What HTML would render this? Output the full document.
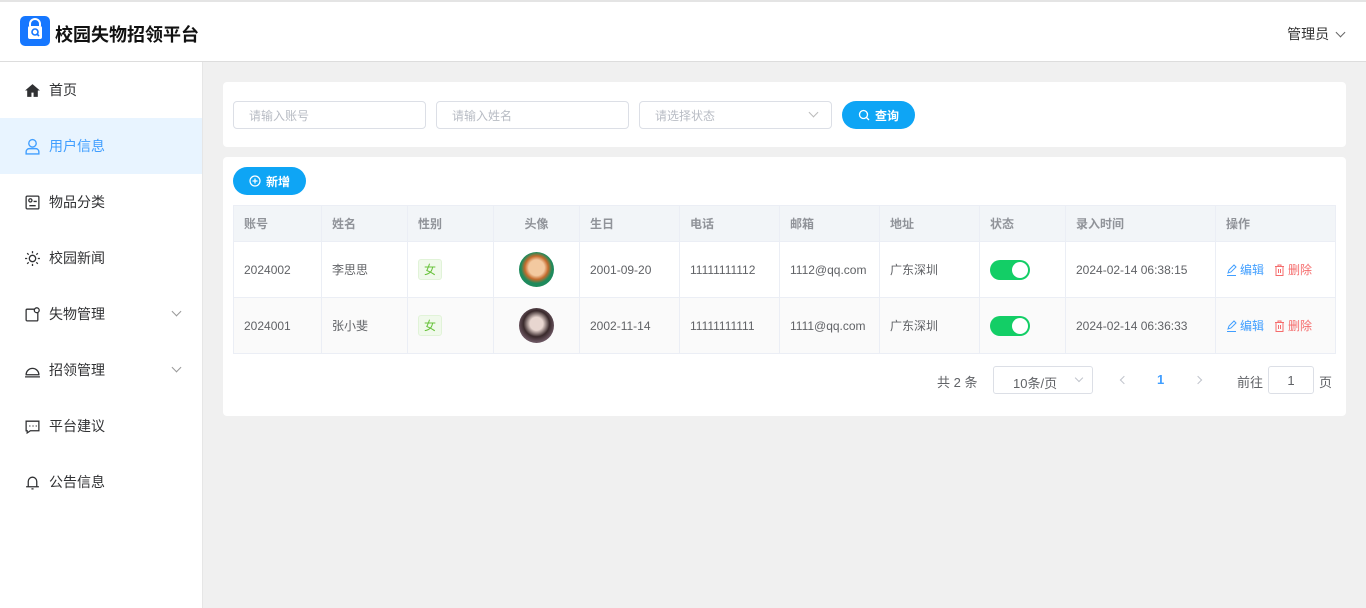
<!DOCTYPE html><html><head><meta charset="utf-8"><style>
*{margin:0;padding:0;box-sizing:border-box}
body{width:1366px;height:608px;overflow:hidden;font-family:"Liberation Sans","Noto Sans CJK SC",sans-serif;font-size:13px;color:#606266;background:#f0f0f0;position:relative}
.hdr{position:absolute;left:0;top:0;width:1366px;height:62px;background:#fff;border-top:2px solid #e4e4e4;border-bottom:1px solid #ddd}
.logo{position:absolute;left:20px;top:14px;width:30px;height:30px;background:#1677ff;border-radius:5px}
.title{position:absolute;left:55px;top:19px;font-size:18px;font-weight:bold;color:#111}
.admin{position:absolute;right:22px;top:22px;font-size:14px;color:#333}
.side{position:absolute;left:0;top:62px;width:203px;height:546px;background:#fff;border-right:1px solid #e6e6e6}
.mi{height:56px;display:flex;align-items:center;padding-left:24px;font-size:14px;color:#303133;position:relative}
.mi svg{width:17px;height:17px;margin-right:8px}
.mi.act{background:#e8f4ff;color:#409eff}
.arr{position:absolute;right:22px;top:22px;width:7px;height:7px;border-right:1px solid #999;border-bottom:1px solid #999;transform:rotate(45deg)}
.card{position:absolute;background:#fff;border-radius:4px}
.inp{position:absolute;top:19px;height:28px;width:193px;border:1px solid #dcdfe6;border-radius:4px;font-size:12px;color:#b8bcc4;padding:5px 15px}
.btn{position:absolute;background:#0ea5f5;color:#fff;border-radius:16px;font-size:12px;font-weight:bold;display:flex;align-items:center;justify-content:center}
.btn svg{margin-right:5px}
table{position:absolute;left:10px;top:48px;border-collapse:collapse;font-size:12px}
td,th{border:1px solid #ebeef5;padding:0 10px;text-align:left;height:56px;color:#606266;font-weight:normal}
th{height:36px;background:#f2f5f8;color:#909399;font-weight:bold}
tr.s td{background:#fafafa}
.tag{display:inline-block;background:#f0f9eb;border:1px solid #e1f3d8;color:#67c23a;padding:1px 5px;border-radius:3px;font-size:12px}
.av{width:35px;height:35px;border-radius:50%;margin:auto}
.sw{width:40px;height:20px;background:#13ce66;border-radius:10px;position:relative}
.sw:after{content:"";position:absolute;right:2px;top:2px;width:16px;height:16px;border-radius:50%;background:#fff}
.ed{color:#409eff}.de{color:#f56c6c;margin-left:10px}
.ed svg,.de svg{vertical-align:-2px;margin-right:3px}
.chev{position:absolute;width:6px;height:6px;border-left:1px solid #c0c4cc;border-bottom:1px solid #c0c4cc}
</style></head><body>
<div class="hdr">
<div class="logo"><svg width="30" height="30" viewBox="0 0 30 30"><path d="M10 10v-2a5 5 0 0 1 10 0v2" stroke="#fff" stroke-width="2" fill="none"/><rect x="8" y="10" width="14" height="13" rx="2" fill="#fff"/><circle cx="15" cy="16" r="3" stroke="#1677ff" stroke-width="1.6" fill="none"/><path d="M17 18l2 2" stroke="#1677ff" stroke-width="1.6"/></svg></div>
<div class="title">校园失物招领平台</div>
<div class="admin">管理员 <span style="display:inline-block;width:7px;height:7px;border-right:1px solid #666;border-bottom:1px solid #666;transform:rotate(45deg);margin:0 0 3px 4px"></span></div>
</div>
<div class="side">
<div class="mi"><svg viewBox="0 0 16 16"><path d="M8 2L1 8h2v6h4v-4h2v4h4V8h2z" fill="#303133"/></svg>首页</div>
<div class="mi act"><svg viewBox="0 0 16 16" fill="none" stroke="#409eff" stroke-width="1.3"><circle cx="8" cy="5" r="3.5"/><path d="M2 15v-2a3 3 0 0 1 3-3h6a3 3 0 0 1 3 3v2z"/></svg>用户信息</div>
<div class="mi"><svg viewBox="0 0 16 16" fill="none" stroke="#303133" stroke-width="1.2"><rect x="2" y="2" width="12" height="12" rx="1"/><circle cx="6" cy="6" r="1.5"/><path d="M5 11h6M9 7h3"/></svg>物品分类</div>
<div class="mi"><svg viewBox="0 0 16 16" fill="none" stroke="#303133" stroke-width="1.2"><circle cx="8" cy="8" r="3"/><path d="M8 1v2M8 13v2M1 8h2M13 8h2M3 3l1.4 1.4M11.6 11.6L13 13M3 13l1.4-1.4M11.6 4.4L13 3"/></svg>校园新闻</div>
<div class="mi"><svg viewBox="0 0 16 16" fill="none" stroke="#303133" stroke-width="1.2"><rect x="2" y="3" width="11" height="11" rx="1"/><circle cx="12" cy="4" r="2.3" fill="#fff"/></svg>失物管理<span class="arr"></span></div>
<div class="mi"><svg viewBox="0 0 16 16" fill="none" stroke="#303133" stroke-width="1.2"><path d="M2 12a6 6 0 0 1 12 0zM1 14h14"/></svg>招领管理<span class="arr"></span></div>
<div class="mi"><svg viewBox="0 0 16 16" fill="none" stroke="#303133" stroke-width="1.2"><path d="M2 3h12v9H6l-3 2v-2H2z"/><path d="M5 7.5h1M8 7.5h1M11 7.5h1"/></svg>平台建议</div>
<div class="mi"><svg viewBox="0 0 16 16" fill="none" stroke="#303133" stroke-width="1.2"><path d="M4 12V7a4 4 0 0 1 8 0v5zM2 12h12M7 14h2"/></svg>公告信息</div>
</div>
<div class="card" style="left:223px;top:82px;width:1123px;height:65px">
<div class="inp" style="left:10px">请输入账号</div>
<div class="inp" style="left:213px">请输入姓名</div>
<div class="inp" style="left:416px">请选择状态<span style="position:absolute;right:14px;top:7px;width:7px;height:7px;border-right:1px solid #bbb;border-bottom:1px solid #bbb;transform:rotate(45deg)"></span></div>
<div class="btn" style="left:619px;top:19px;width:73px;height:28px"><svg width="12" height="12" viewBox="0 0 12 12" fill="none" stroke="#fff" stroke-width="1.3"><circle cx="5.5" cy="5.5" r="4"/><path d="M8.5 8.5l2.5 2.5"/></svg>查询</div>
</div>
<div class="card" style="left:223px;top:157px;width:1123px;height:259px">
<div class="btn" style="left:10px;top:10px;width:73px;height:28px"><svg width="12" height="12" viewBox="0 0 12 12" fill="none" stroke="#fff" stroke-width="1.2"><circle cx="6" cy="6" r="5"/><path d="M6 3.5v5M3.5 6h5"/></svg>新增</div>
<table>
<tr><th style="width:88px">账号</th><th style="width:86px">姓名</th><th style="width:86px">性别</th><th style="width:86px;text-align:center">头像</th><th style="width:100px">生日</th><th style="width:100px">电话</th><th style="width:100px">邮箱</th><th style="width:100px">地址</th><th style="width:86px">状态</th><th style="width:150px">录入时间</th><th style="width:120px">操作</th></tr>
<tr><td>2024002</td><td>李思思</td><td><span class="tag">女</span></td><td><div class="av" style="background:radial-gradient(circle at 50% 45%,#f3c9a0 30%,#c46a2c 45%,#1e8a5c 60%)"></div></td><td>2001-09-20</td><td>11111111112</td><td>1112@qq.com</td><td>广东深圳</td><td><div class="sw"></div></td><td>2024-02-14 06:38:15</td><td><span class="ed"><svg width="11" height="12" viewBox="0 0 11 12" fill="none" stroke="#409eff"><path d="M2 9l1-3 5-5 2 2-5 5zM1 11.5h9"/></svg>编辑</span><span class="de"><svg width="11" height="12" viewBox="0 0 11 12" fill="none" stroke="#f56c6c"><path d="M1 2.5h9M4 2.5V1h3v1.5M2 2.5v9h7v-9M4.5 5v4M6.5 5v4"/></svg>删除</span></td></tr>
<tr class="s"><td>2024001</td><td>张小斐</td><td><span class="tag">女</span></td><td><div class="av" style="background:radial-gradient(circle at 50% 45%,#e8d6d0 25%,#3a2a2c 50%,#6a5560 70%)"></div></td><td>2002-11-14</td><td>11111111111</td><td>1111@qq.com</td><td>广东深圳</td><td><div class="sw"></div></td><td>2024-02-14 06:36:33</td><td><span class="ed"><svg width="11" height="12" viewBox="0 0 11 12" fill="none" stroke="#409eff"><path d="M2 9l1-3 5-5 2 2-5 5zM1 11.5h9"/></svg>编辑</span><span class="de"><svg width="11" height="12" viewBox="0 0 11 12" fill="none" stroke="#f56c6c"><path d="M1 2.5h9M4 2.5V1h3v1.5M2 2.5v9h7v-9M4.5 5v4M6.5 5v4"/></svg>删除</span></td></tr>
</table>
<div style="position:absolute;left:714px;top:215px;font-size:13px">共 2 条</div>
<div style="position:absolute;left:770px;top:209px;width:100px;height:28px;border:1px solid #dcdfe6;border-radius:3px;padding:6px 0 0 19px;font-size:13px">10条/页<span style="position:absolute;right:10px;top:8px;width:6px;height:6px;border-right:1px solid #c0c4cc;border-bottom:1px solid #c0c4cc;transform:rotate(45deg)"></span></div>
<div class="chev" style="left:898px;top:220px;transform:rotate(45deg)"></div>
<div style="position:absolute;left:934px;top:215px;color:#409eff;font-weight:bold">1</div>
<div class="chev" style="left:972px;top:220px;transform:rotate(-135deg)"></div>
<div style="position:absolute;left:1014px;top:215px">前往</div>
<div style="position:absolute;left:1045px;top:209px;width:46px;height:28px;border:1px solid #dcdfe6;border-radius:3px;text-align:center;padding-top:6px">1</div>
<div style="position:absolute;left:1096px;top:215px">页</div>
</div>
</body></html>
